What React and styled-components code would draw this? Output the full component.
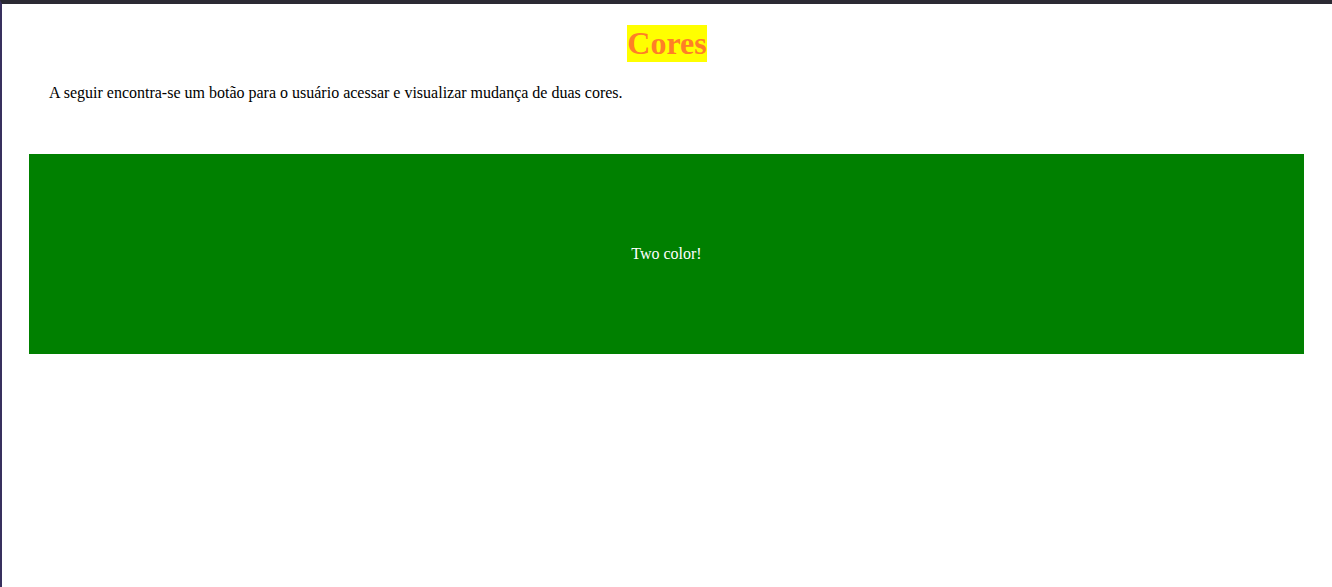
import React from 'react';
import styled, { createGlobalStyle } from 'styled-components';

const GlobalStyle = createGlobalStyle`
  html, body {
    margin: 0;
    padding: 0;
    background: #ffffff;
  }
  body {
    font-family: "Liberation Serif", "Times New Roman", serif;
    color: #000;
  }
`;

function App() {
  return (
    <>
      <GlobalStyle />
      <Frame>
        <TitleRow>
          <Title>Cores</Title>
        </TitleRow>
        <Intro>
          A seguir encontra-se um botão para o usuário acessar e visualizar mudança de duas cores.
        </Intro>
        <ColorButton type='button'>Two color!</ColorButton>
      </Frame>
    </>
  );
}

export default App;

const Frame = styled.div`
  box-sizing: border-box;
  min-height: 100vh;
  border-top: 4px solid #2b2a33;
  border-left: 2px solid #38305e;
  display: flex;
  flex-direction: column;
`;

const TitleRow = styled.div`
  display: flex;
  justify-content: center;
  margin-top: 21px;
`;

const Title = styled.h1`
  margin: 0;
  font-size: 32px;
  font-weight: bold;
  line-height: 37px;
  color: #ff7f27;
  background: #ffff00;
`;

const Intro = styled.p`
  margin: 22px 0 0 47px;
  font-size: 16px;
  line-height: 18px;
`;

const ColorButton = styled.button`
  margin: 52px 28px 0 27px;
  height: 200px;
  border: none;
  background: #008000;
  color: #ffffff;
  font-family: "Liberation Serif", "Times New Roman", serif;
  font-size: 16px;
  cursor: pointer;
`;
